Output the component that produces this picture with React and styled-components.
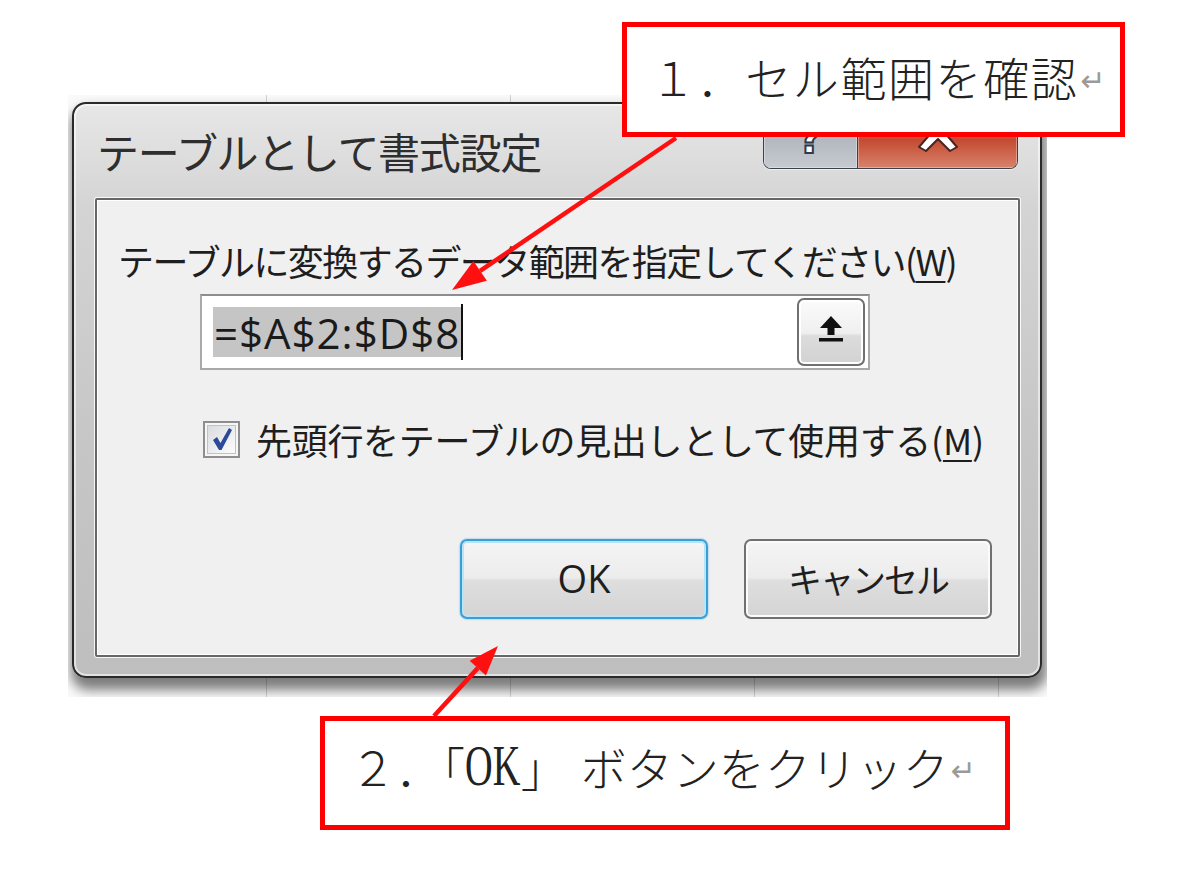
import styled, { createGlobalStyle } from 'styled-components';

const GlobalStyle = createGlobalStyle`
  html, body {
    margin: 0;
    padding: 0;
    background: #ffffff;
  }
  body {
    font-family: "Noto Sans CJK JP", "Noto Sans", sans-serif;
    color: #1b1b1b;
  }
`;

const Stage = styled.div`
  position: relative;
  width: 1200px;
  height: 884px;
  box-sizing: border-box;
  padding: 95px 0 0 68px;
  background: #ffffff;
  overflow: hidden;
`;

/* spreadsheet cells peeking out behind the dialog */
const Sheet = styled.div`
  width: 979px;
  height: 602px;
  box-sizing: border-box;
  padding: 7px 0 0 4px;
  overflow: hidden;
  background-color: #fafafa;
  background-image: repeating-linear-gradient(90deg, transparent 0 243px, #d2d2d2 243px 244px);
  background-position: -45px 0;
`;

const Window = styled.div`
  width: 970px;
  height: 576px;
  box-sizing: border-box;
  display: flex;
  flex-direction: column;
  padding: 0 20px 19px 21px;
  border: 2px solid #2a2a2a;
  border-radius: 14px;
  background: linear-gradient(180deg, #e7e7e7 0%, #d4d4d4 18%, #c6c6c6 60%, #bebebe 100%);
  box-shadow:
    inset 0 0 0 2px rgba(255, 255, 255, 0.55),
    2px 9px 12px 3px rgba(0, 0, 0, 0.5);
`;

const TitleBar = styled.div`
  height: 94px;
  flex-shrink: 0;
  display: flex;
  align-items: flex-start;
`;

const Title = styled.h1`
  margin: 0 0 0 2px;
  align-self: center;
  font-size: 42px;
  font-weight: 400;
  line-height: 1;
  letter-spacing: -1.3px;
  color: #2e2e2e;
`;

const CaptionGroup = styled.div`
  margin-left: auto;
  margin-right: 2px;
  display: flex;
  height: 64px;
  border: 1px solid #3b414a;
  border-top: none;
  border-radius: 0 0 8px 8px;
  overflow: hidden;
  box-shadow: 0 1px 0 rgba(255, 255, 255, 0.6);
`;

const CaptionButton = styled.div`
  width: ${(p) => p.$width}px;
  display: flex;
  align-items: center;
  justify-content: center;
  padding: ${(p) => (p.$close ? '0 0 8px' : '6px 0 0')};
  box-sizing: border-box;
  background: ${(p) =>
    p.$close
      ? 'linear-gradient(180deg, #eaa391 0%, #d36a52 45%, #c24a31 55%, #d9826b 100%)'
      : 'linear-gradient(180deg, #e4e7eb 0%, #cbcfd5 45%, #b3b8c0 55%, #c6cad0 100%)'};
  box-shadow: inset 0 0 0 1px rgba(255, 255, 255, 0.35);

  & + & {
    border-left: 1px solid #3b414a;
  }
`;

const HelpGlyph = styled.span`
  font-family: "DejaVu Sans", sans-serif;
  font-size: 42px;
  font-weight: 700;
  line-height: 1;
  color: #ffffff;
  -webkit-text-stroke: 2px #2f3a4c;
`;

const Panel = styled.div`
  flex: 1;
  display: flex;
  flex-direction: column;
  padding: 38px 26px 0 21px;
  border: 2px solid #666666;
  border-radius: 2px;
  background: #f0f0f0;
  box-shadow: 0 0 0 1px rgba(255, 255, 255, 0.85), inset 0 0 0 1px #ffffff;
`;

const Prompt = styled.p`
  margin: 0;
  font-size: 36px;
  line-height: 44px;
  letter-spacing: ${(p) => p.$tracking}px;
  color: #1e1e1e;
  white-space: nowrap;

  u {
    text-decoration-thickness: 2px;
    text-underline-offset: 5px;
  }
`;

const RangeField = styled.div`
  margin: 12px 0 0 82px;
  width: 670px;
  height: 76px;
  box-sizing: border-box;
  display: flex;
  align-items: center;
  padding: 0 3px 0 11px;
  border: 2px solid #a9a9a9;
  border-top-color: #8d8d8d;
  background: #ffffff;
`;

const Selected = styled.span`
  height: 50px;
  display: flex;
  align-items: center;
  padding: 0 1px;
  background: #c5c5c5;
  font-family: "Open Sans", "Liberation Sans", sans-serif;
  font-size: 42px;
  letter-spacing: 1px;
  color: #1a1a1a;
`;

const Caret = styled.span`
  width: 2px;
  height: 56px;
  background: #111111;
`;

const CollapseButton = styled.div`
  margin-left: auto;
  width: 68px;
  height: 68px;
  box-sizing: border-box;
  display: flex;
  align-items: center;
  justify-content: center;
  padding-bottom: 6px;
  border: 2px solid #707070;
  border-radius: 7px;
  background: linear-gradient(180deg, #fbfbfb 0%, #efefef 52%, #dcdcdc 56%, #d2d2d2 100%);
  box-shadow: inset 0 0 0 2px #ffffff;
`;

const CheckRow = styled.label`
  margin: 47px 0 0 85px;
  display: flex;
  align-items: center;
  gap: 16px;
`;

const CheckBox = styled.span`
  width: 37px;
  height: 37px;
  box-sizing: border-box;
  display: flex;
  align-items: center;
  justify-content: center;
  border: 2px solid #8e8e8e;
  background: linear-gradient(135deg, #d6d8dc 0%, #f4f4f4 70%, #ffffff 100%);
  box-shadow: inset 0 0 0 2px #f6f6f6, inset 0 0 0 3px #bfc3c9;
`;

const ButtonRow = styled.div`
  margin-top: 78px;
  display: flex;
  justify-content: flex-end;
  gap: 36px;
`;

const DialogButton = styled.button`
  width: 248px;
  height: 80px;
  box-sizing: border-box;
  display: flex;
  align-items: center;
  justify-content: center;
  padding: 0 0 2px;
  border: 2px solid ${(p) => (p.$focused ? '#3b9ed6' : '#707070')};
  border-radius: 7px;
  background: linear-gradient(180deg, #f5f5f5 0%, #ececec 48%, #dedede 52%, #d4d4d4 100%);
  box-shadow: ${(p) =>
    p.$focused
      ? 'inset 0 0 0 2px #b6e4f8, 0 0 2px #5ab4e6'
      : 'inset 0 0 0 2px #fbfbfb'};
  font-family: "Open Sans", "Noto Sans CJK JP", sans-serif;
  font-size: ${(p) => (p.$jp ? 34 : 38)}px;
  letter-spacing: ${(p) => (p.$jp ? -2 : 0)}px;
  color: #1e1e1e;
`;

/* red annotation boxes laid over the capture */
const Callout = styled.div`
  position: absolute;
  left: ${(p) => p.$x}px;
  top: ${(p) => p.$y}px;
  width: ${(p) => p.$w}px;
  height: ${(p) => p.$h}px;
  box-sizing: border-box;
  display: flex;
  align-items: center;
  padding: 0 0 ${(p) => p.$lift}px ${(p) => p.$indent}px;
  border: 5px solid #ff0000;
  background: #ffffff;
  font-family: "Noto Sans CJK JP", sans-serif;
  font-size: 46px;
  font-weight: 300;
  line-height: 1;
  letter-spacing: ${(p) => p.$tracking || 0}px;
  color: #222222;
  white-space: nowrap;
  text-spacing-trim: space-all;
`;

const Halt = styled.span`
  font-feature-settings: "halt";
`;

/* narrow serif latin, like a half-width mincho face */
const Latin = styled.span`
  display: inline-block;
  font-family: "Liberation Serif", serif;
  font-size: 58px;
  letter-spacing: 0;
  transform: scaleX(0.66);
  transform-origin: left center;
  margin-right: -28px;
`;

const Gap = styled.span`
  margin-left: ${(p) => p.$size}px;
`;

const ReturnMark = styled.span`
  align-self: center;
  margin: 10px 0 0 2px;
  font-family: "DejaVu Sans", sans-serif;
  font-size: 30px;
  font-weight: 400;
  color: #9a9a9a;
`;

const ArrowLayer = styled.svg`
  position: absolute;
  left: 0;
  top: 0;
  pointer-events: none;
`;

function UploadIcon() {
  return (
    <svg width="26" height="28" viewBox="0 0 26 28">
      <path d="M13 1 L24 13 H16.5 V20 H9.5 V13 H2 Z" fill="#111" />
      <rect x="1" y="23" width="24" height="3.5" fill="#111" />
    </svg>
  );
}

function CheckMark() {
  return (
    <svg width="24" height="26" viewBox="0 0 24 26">
      <path d="M3 14 L7 11 L10.5 17 L19 2 L22 4 L11.5 24 L9 24 Z" fill="#2b4a9b" />
    </svg>
  );
}

function CloseGlyph() {
  return (
    <svg width="44" height="40" viewBox="0 0 44 40">
      <path
        d="M3 5 L10 1 L22 13 L34 1 L41 5 L28 20 L41 35 L34 39 L22 27 L10 39 L3 35 L16 20 Z"
        fill="#ffffff"
        stroke="#4a2420"
        strokeWidth="2"
        strokeLinejoin="round"
      />
    </svg>
  );
}

function Arrow({ from, tip, head = 34, half = 12 }) {
  const dx = tip[0] - from[0];
  const dy = tip[1] - from[1];
  const len = Math.hypot(dx, dy);
  const ux = dx / len;
  const uy = dy / len;
  const bx = tip[0] - ux * head;
  const by = tip[1] - uy * head;
  const points = [
    `${tip[0]},${tip[1]}`,
    `${bx - uy * half},${by + ux * half}`,
    `${bx + uy * half},${by - ux * half}`,
  ].join(' ');
  return (
    <g>
      <line x1={from[0]} y1={from[1]} x2={bx} y2={by} stroke="#ff1010" strokeWidth="4.5" />
      <polygon points={points} fill="#ff1010" />
    </g>
  );
}

export default function App() {
  return (
    <Stage>
      <GlobalStyle />
      <Sheet>
        <Window>
          <TitleBar>
            <Title>テーブルとして書式設定</Title>
            <CaptionGroup>
              <CaptionButton $width={93}>
                <HelpGlyph>?</HelpGlyph>
              </CaptionButton>
              <CaptionButton $width={160} $close>
                <CloseGlyph />
              </CaptionButton>
            </CaptionGroup>
          </TitleBar>

          <Panel>
            <Prompt $tracking={-1.6}>
              テーブルに変換するデータ範囲を指定してください(<u>W</u>)
            </Prompt>

            <RangeField>
              <Selected>=$A$2:$D$8</Selected>
              <Caret />
              <CollapseButton>
                <UploadIcon />
              </CollapseButton>
            </RangeField>

            <CheckRow>
              <CheckBox>
                <CheckMark />
              </CheckBox>
              <Prompt $tracking={-0.3}>
                先頭行をテーブルの見出しとして使用する(<u>M</u>)
              </Prompt>
            </CheckRow>

            <ButtonRow>
              <DialogButton $focused>OK</DialogButton>
              <DialogButton $jp>キャンセル</DialogButton>
            </ButtonRow>
          </Panel>
        </Window>
      </Sheet>

      <ArrowLayer width="1200" height="884" viewBox="0 0 1200 884">
        <Arrow from={[676, 138]} tip={[452, 290]} />
        <Arrow from={[434, 716]} tip={[498, 646]} head={30} half={11} />
      </ArrowLayer>

      <Callout $x={622} $y={22} $w={503} $h={115} $indent={23} $lift={8} $tracking={1.6}>
        １．セル範囲を確認
        <ReturnMark>↵</ReturnMark>
      </Callout>

      <Callout $x={320} $y={716} $w={690} $h={114} $indent={25} $lift={14}>
        ２<Halt>．</Halt>「<Latin>OK</Latin>」
        <Gap $size={14} />
        ボタンをクリック
        <ReturnMark>↵</ReturnMark>
      </Callout>
    </Stage>
  );
}
